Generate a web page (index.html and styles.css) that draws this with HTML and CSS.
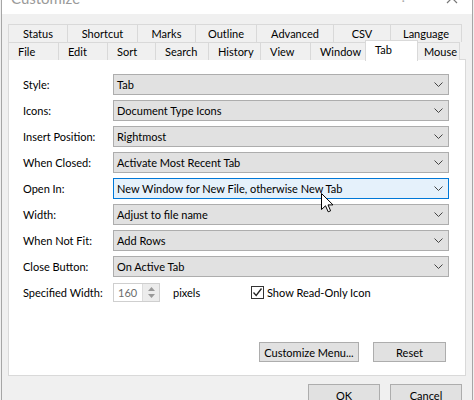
FILE: index.html
```html
<!DOCTYPE html>
<html>
<head>
  <title>Customize</title>
  <link rel="stylesheet" href="styles.css">
</head>
<body>
  <div class="window">
    <div class="titlebar">
      <span class="title">Customize</span>
      <span class="title-dots">:</span>
      <svg class="title-close" width="12" height="12" viewBox="0 0 12 12"><path d="M1 1L11 11M11 1L1 11" stroke="#777" stroke-width="1.2" fill="none"/></svg>
    </div>

    <div class="content">
      <div class="tabs">
        <div class="tab-row back">
          <span class="tab" style="width:59px">Status</span>
          <span class="tab" style="width:70px">Shortcut</span>
          <span class="tab" style="width:58px">Marks</span>
          <span class="tab" style="width:61px">Outline</span>
          <span class="tab" style="width:77px">Advanced</span>
          <span class="tab" style="width:57px">CSV</span>
          <span class="tab last" style="width:72px">Language</span>
        </div>
        <div class="tab-row front">
          <span class="tab" style="width:50px">File</span>
          <span class="tab" style="width:49px">Edit</span>
          <span class="tab" style="width:48px">Sort</span>
          <span class="tab" style="width:53px">Search</span>
          <span class="tab" style="width:52px">History</span>
          <span class="tab" style="width:50px">View</span>
          <span class="tab" style="width:55px">Window</span>
          <span class="tab active" style="width:53px">Tab</span>
          <span class="tab last mouse" style="width:42px">Mouse</span>
        </div>
      </div>

      <div class="panel">
        <div class="form">
          <div class="row">
            <label>Style:</label>
            <div class="combo"><span>Tab</span><svg class="chev" width="9" height="5" viewBox="0 0 9 5"><path d="M0.5 0.5L4.5 4.5L8.5 0.5" stroke="#444" fill="none"/></svg></div>
          </div>
          <div class="row">
            <label>Icons:</label>
            <div class="combo"><span>Document Type Icons</span><svg class="chev" width="9" height="5" viewBox="0 0 9 5"><path d="M0.5 0.5L4.5 4.5L8.5 0.5" stroke="#444" fill="none"/></svg></div>
          </div>
          <div class="row">
            <label>Insert Position:</label>
            <div class="combo"><span>Rightmost</span><svg class="chev" width="9" height="5" viewBox="0 0 9 5"><path d="M0.5 0.5L4.5 4.5L8.5 0.5" stroke="#444" fill="none"/></svg></div>
          </div>
          <div class="row">
            <label>When Closed:</label>
            <div class="combo"><span>Activate Most Recent Tab</span><svg class="chev" width="9" height="5" viewBox="0 0 9 5"><path d="M0.5 0.5L4.5 4.5L8.5 0.5" stroke="#444" fill="none"/></svg></div>
          </div>
          <div class="row">
            <label>Open In:</label>
            <div class="combo hot"><span>New Window for New File, otherwise New Tab</span><svg class="chev" width="9" height="5" viewBox="0 0 9 5"><path d="M0.5 0.5L4.5 4.5L8.5 0.5" stroke="#444" fill="none"/></svg></div>
          </div>
          <div class="row">
            <label>Width:</label>
            <div class="combo"><span>Adjust to file name</span><svg class="chev" width="9" height="5" viewBox="0 0 9 5"><path d="M0.5 0.5L4.5 4.5L8.5 0.5" stroke="#444" fill="none"/></svg></div>
          </div>
          <div class="row">
            <label>When Not Fit:</label>
            <div class="combo"><span>Add Rows</span><svg class="chev" width="9" height="5" viewBox="0 0 9 5"><path d="M0.5 0.5L4.5 4.5L8.5 0.5" stroke="#444" fill="none"/></svg></div>
          </div>
          <div class="row">
            <label>Close Button:</label>
            <div class="combo"><span>On Active Tab</span><svg class="chev" width="9" height="5" viewBox="0 0 9 5"><path d="M0.5 0.5L4.5 4.5L8.5 0.5" stroke="#444" fill="none"/></svg></div>
          </div>
          <div class="row spin-row">
            <label>Specified Width:</label>
            <div class="spinner">
              <span class="spin-value">160</span>
              <span class="spin-arrows">
                <svg width="7" height="4" viewBox="0 0 7 4"><path d="M0 4L3.5 0L7 4Z" fill="#999"/></svg>
                <svg width="7" height="4" viewBox="0 0 7 4"><path d="M0 0L3.5 4L7 0Z" fill="#999"/></svg>
              </span>
            </div>
            <span class="unit">pixels</span>
            <span class="check">
              <span class="box"><svg width="11" height="11" viewBox="0 0 11 11"><path d="M1.5 5.5L4.2 8.5L9.5 1.5" stroke="#222" stroke-width="1.3" fill="none"/></svg></span>
              Show Read-Only Icon
            </span>
          </div>
        </div>

        <div class="panel-buttons">
          <button class="btn menu-btn">Customize Menu...</button>
          <button class="btn reset-btn">Reset</button>
        </div>
      </div>

      <div class="dialog-buttons">
        <button class="btn dlg-btn">OK</button>
        <button class="btn dlg-btn">Cancel</button>
      </div>
    </div>

    <!-- mouse pointer over the Open In box -->
    <svg class="cursor" width="13" height="20" viewBox="0 0 13 20">
      <path d="M0.5 0.5L0.5 16.5L4.5 12.8L7.2 18.8L9.6 17.8L7 11.9L12 11.9Z" fill="#fff" stroke="#000" stroke-width="1"/>
    </svg>
  </div>
</body>
</html>
```

FILE: styles.css
```css
/* Customize dialog */

body {
  margin: 0;
  background: #f0f0f0;
  font-family: Lato, "Noto Sans", sans-serif;
  font-size: 11px;
  color: #000;
}

.window {
  position: relative;
  margin-left: 1px;
  width: 472px;
  height: 400px;
  box-sizing: border-box;
  border-left: 1px solid #a6a6a6;
  border-right: 1px solid #a6a6a6;
  overflow: hidden;
}

.titlebar {
  height: 14px;
  background: #fff;
  display: flex;
  align-items: flex-start;
  overflow: hidden;
}

.title {
  margin: -9px 0 0 9px;
  font-size: 15px;
  line-height: 15px;
  color: #9a9a9a;
}

.title-dots {
  margin: -10px 0 0 auto;
  font-size: 14px;
  line-height: 14px;
  color: #aaa;
}

.title-close {
  margin: -8px 14px 0 41px;
}

.content {
  padding: 10px 6px 0 6px;
}

/* tabs */

.tabs {
  position: relative;
  z-index: 1;
  margin-bottom: -1px;
}

.tab-row {
  display: flex;
  height: 18px;
}

.tab {
  box-sizing: border-box;
  height: 18px;
  line-height: 17px;
  border-top: 1px solid #d9d9d9;
  border-left: 1px solid #d9d9d9;
  background: #f0f0f0;
  white-space: nowrap;
}

.tab.last {
  border-right: 1px solid #d9d9d9;
}

.back .tab {
  text-align: center;
}

.front .tab {
  padding-left: 9px;
}

.front .tab.mouse {
  padding-left: 6px;
}

.tab.active {
  height: 21px;
  margin-top: -2px;
  background: #fff;
  border-right: 1px solid #d9d9d9;
  line-height: 18px;
  padding-left: 9px;
}

.tab.active + .tab {
  border-left: none;
}

/* panel */

.panel {
  height: 317px;
  box-sizing: border-box;
  border: 1px solid #d9d9d9;
  background: #fff;
  display: flex;
  flex-direction: column;
}

.form {
  padding: 14px 0 0 14px;
  display: flex;
  flex-direction: column;
  gap: 5px;
}

.row {
  display: flex;
  align-items: center;
  height: 21px;
  white-space: nowrap;
}

.row label {
  width: 90px;
  flex: none;
}

.combo {
  width: 336px;
  height: 21px;
  box-sizing: border-box;
  border: 1px solid #adadad;
  background: #e1e1e1;
  display: flex;
  align-items: center;
  padding: 0 5px 0 3px;
}

.combo span {
  flex: 1;
}

.combo.hot {
  background: #e5f1fb;
  border-color: #0078d7;
}

.spin-row {
  margin-top: 1px;
  height: 19px;
}

.spinner {
  width: 47px;
  height: 19px;
  box-sizing: border-box;
  border: 1px solid #cfcfcf;
  display: flex;
}

.spin-value {
  flex: 1;
  padding-left: 4px;
  line-height: 17px;
  color: #6d6d6d;
}

.spin-arrows {
  width: 16px;
  border-left: 1px solid #dcdcdc;
  background: #ececec;
  display: flex;
  flex-direction: column;
  align-items: center;
  justify-content: center;
  gap: 3px;
}

.spin-arrows svg {
  display: block;
}

.unit {
  width: 91px;
  padding-left: 13px;
  box-sizing: border-box;
}

.check {
  display: flex;
  align-items: center;
  gap: 3px;
}

.box {
  width: 13px;
  height: 13px;
  box-sizing: border-box;
  border: 1px solid #333;
  background: #fff;
  display: flex;
  align-items: center;
  justify-content: center;
}

.panel-buttons {
  margin-top: auto;
  margin-bottom: 13px;
  display: flex;
  justify-content: flex-end;
  gap: 14px;
  padding-right: 19px;
}

.btn {
  box-sizing: border-box;
  height: 20px;
  border: 1px solid #adadad;
  background: #e1e1e1;
  font-family: inherit;
  font-size: 11px;
  padding: 0;
  color: #000;
  white-space: nowrap;
}

.menu-btn {
  width: 100px;
}

.reset-btn {
  width: 73px;
}

.dialog-buttons {
  margin-top: 8px;
  display: flex;
  justify-content: flex-end;
  gap: 10px;
  padding-right: 4px;
}

.dlg-btn {
  width: 72px;
  height: 23px;
}

.cursor {
  position: absolute;
  left: 319px;
  top: 193px;
}
```
